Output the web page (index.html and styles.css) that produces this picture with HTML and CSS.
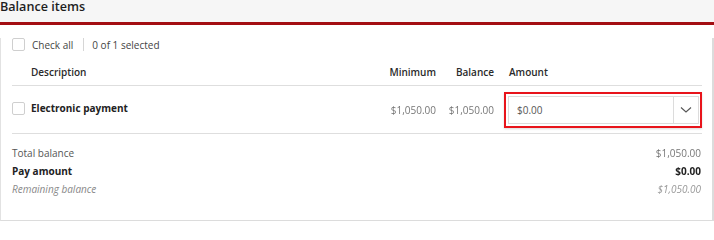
FILE: index.html
```html
<!DOCTYPE html>
<html>
<head>
<meta charset="utf-8">
<link rel="stylesheet" href="styles.css">
</head>
<body>
<section class="panel">
  <h2 class="panel-title">Balance items</h2>
  <div class="card">
    <div class="check-row">
      <span class="checkbox"></span>
      <span class="check-label">Check all</span>
      <span class="sep"></span>
      <span class="count">0 of 1 selected</span>
    </div>
    <div class="grid head">
      <div class="c-desc">Description</div>
      <div class="c-num">Minimum</div>
      <div class="c-num c-bal">Balance</div>
      <div class="c-amt">Amount</div>
    </div>
    <div class="grid item">
      <div class="c-desc item-desc">
        <span class="checkbox"></span>
        <span class="item-name">Electronic payment</span>
      </div>
      <div class="c-num money">$1,050.00</div>
      <div class="c-num c-bal money">$1,050.00</div>
      <div class="c-amt">
        <div class="amount-focus">
          <div class="amount-input">
            <span class="amount-value">$0.00</span>
            <span class="amount-toggle">
              <svg width="12" height="8" viewBox="0 0 12 8"><polyline points="1,1.5 6,6 11,1.5" fill="none" stroke="#555" stroke-width="1.1"/></svg>
            </span>
          </div>
        </div>
      </div>
    </div>
    <div class="totals">
      <div class="total-row"><span>Total balance</span><span class="money">$1,050.00</span></div>
      <div class="total-row strong"><span>Pay amount</span><span class="money dark">$0.00</span></div>
      <div class="total-row muted"><span>Remaining balance</span><span class="money">$1,050.00</span></div>
    </div>
  </div>
</section>
</body>
</html>
```
FILE: styles.css
```css
* { box-sizing: border-box; }
html, body { margin: 0; padding: 0; background: #ffffff; }
body { font-family: "Open Sans", "Noto Sans", sans-serif; color: #333; font-size: 10px; }

.panel { width: 714px; }
.panel-title {
  margin: 0;
  height: 25px;
  padding: 0;
  background: #f6f6f6;
  border-bottom: 3px solid #a30d12;
  font-size: 12.6px;
  font-weight: 600;
  line-height: 13px;
  color: #1e1e1e;
}
.card {
  border-left: 1px solid #e2e2e2;
  border-right: 2px solid #dcdcdc;
  border-bottom: 1px solid #dcdcdc;
  padding: 0 10px 0 11px;
  height: 183px;
}
.check-row {
  display: flex;
  align-items: center;
  height: 13px;
  margin-top: 13px;
}
.checkbox {
  width: 13px;
  height: 13px;
  border: 1px solid #cfcfcf;
  border-radius: 2px;
  background: #fff;
  flex: none;
}
.check-label { margin-left: 7px; color: #444; }
.sep { width: 1px; height: 13px; background: #d6d6d6; margin: 0 8px 0 10px; }
.count { color: #444; }

.grid {
  display: grid;
  grid-template-columns: 1fr 67px 68px 198px;
  align-items: center;
}
.head {
  margin-top: 14px;
  padding-bottom: 6px;
  border-bottom: 1px solid #dedede;
  font-weight: 600;
  color: #2a2a2a;
  line-height: 14px;
}
.head .c-desc { padding-left: 19px; }
.head .c-amt { padding-left: 5px; }
.c-num { text-align: right; }
.c-bal { padding-right: 10px; }

.item {
  height: 48px;
  border-bottom: 1px solid #dedede;
}
.item-desc { display: flex; align-items: center; margin-top: -3px; }
.item-name { margin-left: 6px; font-weight: 700; color: #222; }
.money { color: #777; filter: blur(0.6px); font-size: 10px; }
.money.dark { color: #222; font-weight: 700; }

.amount-focus {
  border: 2px solid #e8141b;
  padding: 2px 1px 2px 2px;
  height: 36px;
  box-shadow: 0 1px 2px rgba(0,0,0,0.15);
}
.amount-input {
  display: flex;
  height: 28px;
  border: 1px solid #dcdcdc;
  align-items: stretch;
}
.amount-value { flex: 1; display: flex; align-items: center; padding-left: 8px; color: #555; }
.amount-toggle {
  width: 25px;
  border-left: 1px solid #dcdcdc;
  display: flex;
  align-items: center;
  justify-content: center;
}

.totals { padding-top: 10px; }
.total-row {
  display: flex;
  justify-content: space-between;
  height: 18px;
  align-items: center;
  color: #555;
  padding-right: 1px;
}
.total-row.strong { font-weight: 700; color: #222; }
.total-row.muted { font-style: italic; color: #888; }
.total-row.muted .money { color: #999; }
```
